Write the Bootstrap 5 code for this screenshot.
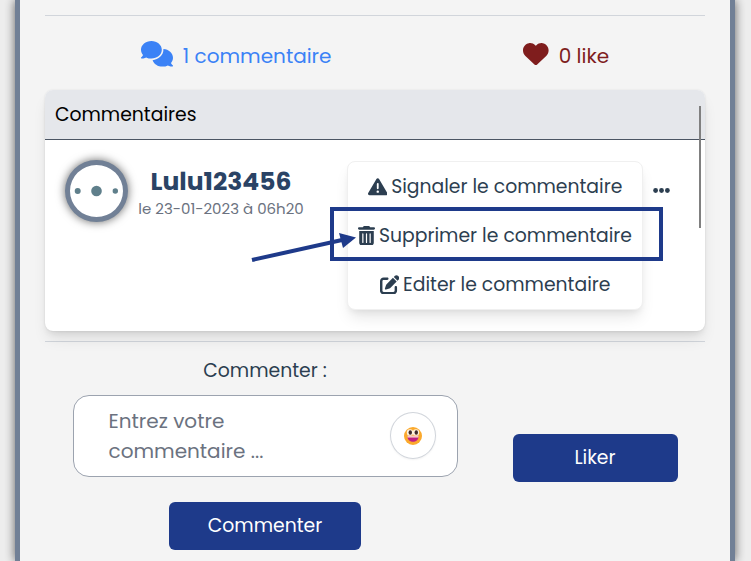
<!DOCTYPE html>
<html lang="fr">
<head>
<meta charset="utf-8">
<meta name="viewport" content="width=device-width, initial-scale=1">
<title>Commentaires</title>
<link href="https://cdn.jsdelivr.net/npm/bootstrap@5.3.0/dist/css/bootstrap.min.css" rel="stylesheet">
<style>
body{font-family:Poppins,Inter,sans-serif;font-size:18.8px;line-height:29px;color:#2c3e50;background:#eee;overflow:hidden}
svg{fill:currentColor;flex:none}
.frame{width:720px;height:561px;margin-left:15px;padding:15px 25px 0;background:#f4f4f4;border:solid #718096;border-width:0 5px;box-shadow:0 0 10px rgba(0,0,0,.6)}
.rule{height:1px;background:#d1d5db}
.rule-low{margin-top:10px}
.stats{height:74px;font-size:20px;line-height:30px;padding-top:25px}
.stats>div{gap:10px}
.stats svg{height:25.6px}
.blue{color:#3b82f6}
.heart{color:#7f1d1d}
.panel{height:241px;border-radius:8px;background:#fff;box-shadow:0 10px 15px -3px rgba(0,0,0,.1),0 4px 6px -2px rgba(0,0,0,.08),0 0 2px rgba(0,0,0,.1)}
.panel-title{height:50px;padding:10px 10px 0;background:#e5e7eb;border-bottom:1px solid #4b5563;border-radius:8px 8px 0 0;color:#000}
.scroll-thumb{right:4px;top:16px;width:2px;height:122px;background:#808080}
.avatar{width:63px;height:62px;margin:20px 0 0 20px;border:5px solid #718096;border-radius:50%;background:#fff;box-shadow:0 0 10px rgba(0,0,0,.6)}
.author{width:166px;margin:23px 0 0 10px}
.pseudo{font-size:25px;font-weight:700;line-height:37px;color:#2a4365}
.date{font-size:15px;line-height:17px;color:#6b7280}
.actions{width:296px;height:149px;margin:21px 0 0 43px;border-radius:8px;border:1px solid #f0f0f0;background:#fff;box-shadow:0 10px 15px -3px rgba(0,0,0,.1),0 4px 6px -2px rgba(0,0,0,.06)}
.action{height:49px;gap:4px;line-height:49px}
.action svg{height:19.5px}
.dots{margin:38px 0 0 9px}
.highlight{left:285px;top:117px;width:333px;height:54px;border:4px solid #1e3a8a}
.arrow{left:206px;top:138px;color:#1e3a8a}
.form-title{margin-top:14px}
.entry{width:385px;height:82px;margin-top:10px;padding:10px 21px 10px 35px;border:1px solid #9ca3af;border-radius:16px;background:#fff;font-size:20px;line-height:30px;color:#6b7280}
.emoji{width:46px;height:47px;margin-top:-1px;border:1px solid #d1d5db;border-radius:50%;box-shadow:0 1px 2px rgba(0,0,0,.05)}
.btn-main{height:48px;--bs-btn-color:#fff;--bs-btn-bg:#1e3a8a;--bs-btn-font-size:18.8px;--bs-btn-border-radius:6px;--bs-btn-padding-y:0;--bs-btn-border-width:0}
.send{width:192px;margin-top:25px}
.like{width:165px;margin-top:92px}
</style>
</head>
<body>
<main class="frame">
<div class="rule"></div>
<div class="stats d-flex justify-content-around">
<div class="blue d-flex"><svg width="32" viewBox="0 0 640 512"><path d="M208 352c114.900 0 208-78.800 208-176S322.900 0 208 0S0 78.800 0 176c0 38.600 14.700 74.300 39.600 103.400c-3.500 9.400-8.700 17.700-14.200 24.700c-4.800 6.200-9.700 11-13.300 14.300c-1.800 1.600-3.300 2.900-4.300 3.700l-1.300 1C1 327.200-1.400 334.400 .8 340.900S9.100 352 16 352c21.800 0 43.800-5.600 62.100-12.500c9.200-3.500 17.800-7.400 25.300-11.400C134.100 343.300 169.800 352 208 352zM448 176c0 112.300-99.100 196.900-216.500 207C255.800 457.400 336.400 512 432 512c38.200 0 73.900-8.700 104.700-23.900c7.500 4 16 7.900 25.200 11.400c18.300 6.900 40.300 12.500 62.100 12.500c6.900 0 13.100-4.500 15.200-11.100c2.100-6.600-.2-13.800-5.800-17.900l-1.300-1c-1-.8-2.500-2-4.300-3.700c-3.600-3.300-8.500-8.100-13.300-14.300c-5.500-7-10.700-15.400-14.200-24.700c24.900-29 39.600-64.700 39.600-103.400c0-92.800-84.900-168.900-192.600-175.500c.4 5.100 .6 10.300 .6 15.500z"/></svg><span>1 commentaire</span></div>
<div class="heart d-flex"><svg width="25.6" viewBox="0 0 512 512"><path d="M47.600 300.400L228.300 469.100c7.500 7 17.400 10.900 27.700 10.900s20.200-3.900 27.700-10.900L464.400 300.400c30.400-28.300 47.600-68 47.600-109.500v-5.800c0-69.900-50.500-129.500-119.400-141C347 36.500 300.600 51.400 268 84L256 96 244 84c-32.600-32.600-79-47.500-124.600-39.900C50.500 55.600 0 115.200 0 185.100v5.800c0 41.500 17.200 81.200 47.600 109.500z"/></svg><span>0 like</span></div>
</div>
<section class="panel position-relative">
<div class="panel-title">Commentaires</div>
<div class="d-flex align-items-start">
<div class="avatar flex-shrink-0"><svg class="d-block" width="53" height="52" viewBox="0 0 53 52"><g fill="#5f7f8b"><circle cx="7.700" cy="26" r="3"/><circle cx="26.500" cy="26" r="5.300"/><circle cx="45.300" cy="26" r="2.700"/></g></svg></div>
<div class="author text-center text-nowrap"><div class="pseudo">Lulu123456</div><div class="date">le 23-01-2023 à 06h20</div></div>
<div class="actions flex-shrink-0 text-nowrap">
<div class="action d-flex justify-content-center align-items-center"><svg width="19.500" viewBox="0 0 512 512"><path d="M256 32c14.200 0 27.300 7.500 34.500 19.800l216 368c7.300 12.400 7.300 27.700 .2 40.100S486.300 480 472 480H40c-14.300 0-27.600-7.700-34.700-20.100s-7-27.800 .2-40.100l216-368C228.700 39.500 241.800 32 256 32zm0 128c-13.300 0-24 10.700-24 24V296c0 13.300 10.700 24 24 24s24-10.700 24-24V184c0-13.300-10.700-24-24-24zm32 224a32 32 0 1 0 -64 0 32 32 0 1 0 64 0z"/></svg><span>Signaler le commentaire</span></div>
<div class="action d-flex justify-content-center align-items-center"><svg width="17" viewBox="0 0 448 512"><path d="M135.200 17.700C140.600 6.800 151.700 0 163.800 0H284.200c12.100 0 23.200 6.800 28.600 17.700L320 32h96c17.700 0 32 14.300 32 32s-14.300 32-32 32H32C14.300 96 0 81.700 0 64S14.300 32 32 32h96l7.200-14.300zM32 128H416V448c0 35.300-28.700 64-64 64H96c-35.300 0-64-28.700-64-64V128zm96 64c-8.800 0-16 7.200-16 16V432c0 8.800 7.200 16 16 16s16-7.200 16-16V208c0-8.800-7.200-16-16-16zm96 0c-8.800 0-16 7.200-16 16V432c0 8.800 7.200 16 16 16s16-7.200 16-16V208c0-8.800-7.200-16-16-16zm96 0c-8.800 0-16 7.200-16 16V432c0 8.800 7.200 16 16 16s16-7.200 16-16V208c0-8.800-7.200-16-16-16z"/></svg><span>Supprimer le commentaire</span></div>
<div class="action d-flex justify-content-center align-items-center"><svg width="19.500" viewBox="0 0 512 512"><path d="M471.600 21.700c-21.900-21.900-57.300-21.900-79.200 0L362.300 51.700l97.900 97.900 30.100-30.100c21.900-21.900 21.900-57.300 0-79.200L471.600 21.700zm-299.200 220c-6.100 6.100-10.800 13.600-13.500 21.900l-29.600 88.800c-2.900 8.600-.6 18.100 5.800 24.600s15.900 8.700 24.600 5.800l88.800-29.600c8.200-2.700 15.700-7.400 21.900-13.500L437.700 172.300 339.700 74.300 172.400 241.700zM96 64C43 64 0 107 0 160V416c0 53 43 96 96 96H352c53 0 96-43 96-96V320c0-17.700-14.300-32-32-32s-32 14.300-32 32v96c0 17.700-14.300 32-32 32H96c-17.700 0-32-14.300-32-32V160c0-17.700 14.300-32 32-32h96c17.700 0 32-14.300 32-32s-14.300-32-32-32H96z"/></svg><span>Editer le commentaire</span></div>
</div>
<svg class="dots" width="19" height="24" viewBox="0 0 19 24"><circle cx="3.600" cy="12.500" r="2.400"/><circle cx="9.500" cy="12.500" r="2.400"/><circle cx="15.400" cy="12.500" r="2.400"/></svg>
</div>
<div class="scroll-thumb position-absolute"></div>
<div class="highlight position-absolute"></div>
<svg class="arrow position-absolute" width="108" height="36" viewBox="0 0 108 36"><path d="M1 32L91 12" fill="none" stroke="currentColor" stroke-width="4"/><path d="M88 5L105 9.500L92 20z"/></svg>
</section>
<div class="rule rule-low"></div>
<div class="row g-0">
<div class="col-8 d-flex flex-column align-items-center">
<div class="form-title">Commenter :</div>
<div class="entry d-flex justify-content-between align-items-center"><div>Entrez votre<br>commentaire ...</div>
<div class="emoji d-flex justify-content-center align-items-center"><svg width="18" height="18" viewBox="0 0 18 18"><circle cx="9" cy="9" r="9" fill="#fba92c"/><circle cx="6" cy="5.500" r="3.200" fill="#fff3df"/><circle cx="12" cy="5.500" r="3.200" fill="#fff3df"/><ellipse cx="6.300" cy="5.500" rx="1.700" ry="2.200" fill="#422b2b"/><ellipse cx="12.300" cy="5.500" rx="1.700" ry="2.200" fill="#422b2b"/><path d="M3.500 9.500h11c0 7-11 7-11 0z" fill="#c01f82"/><path d="M3.500 8.500h11v2.100h-11z" fill="#f6c8c5"/></svg></div></div>
<button class="btn btn-main send" type="button">Commenter</button>
</div>
<div class="col-4 text-center"><button class="btn btn-main like" type="button">Liker</button></div>
</div>
</main>
<script src="https://cdn.jsdelivr.net/npm/bootstrap@5.3.0/dist/js/bootstrap.bundle.min.js"></script>
</body>
</html>
